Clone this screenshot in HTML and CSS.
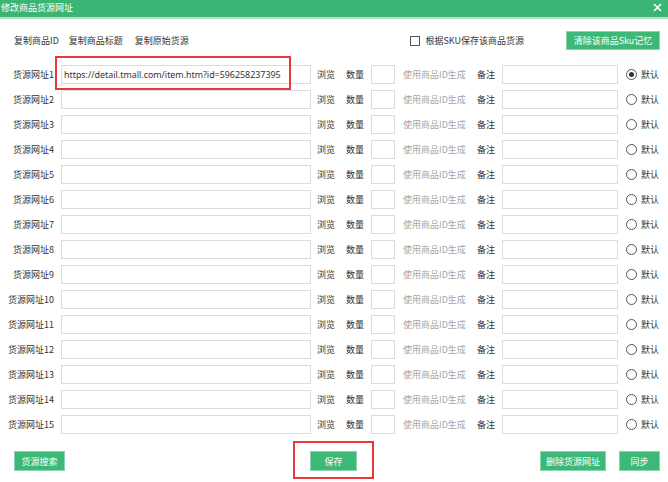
FILE: index.html
```html
<!DOCTYPE html>
<html lang="zh-CN">
<head>
<meta charset="utf-8">
<title>修改商品货源网址</title>
<link rel="stylesheet" href="styles.css">
</head>
<body>
<div class="dialog">
  <div class="titlebar">
    <span class="title">修改商品货源网址</span>
    <svg class="close" width="9" height="9" viewBox="0 0 9 9"><path d="M1 1L8 8M8 1L1 8" stroke="#fff" stroke-width="1.6" fill="none"/></svg>
  </div>
  <div class="toolbar">
    <span class="link">复制商品ID</span>
    <span class="link">复制商品标题</span>
    <span class="link">复制原始货源</span>
    <label class="check"><span class="box"></span>根据SKU保存该商品货源</label>
    <span class="btn btn-clear">清除该商品Sku记忆</span>
  </div>
  <div class="rows">
    <div class="row"><span class="lbl">货源网址1</span><input class="url" value="https://detail.tmall.com/item.htm?id=596258237395"><span class="t browse">浏览</span><span class="t qtyl">数量</span><input class="qty"><span class="gen">使用商品ID生成</span><span class="t note">备注</span><input class="remark"><span class="radio on"></span><span class="t def">默认</span></div>
    <div class="row"><span class="lbl">货源网址2</span><input class="url"><span class="t browse">浏览</span><span class="t qtyl">数量</span><input class="qty"><span class="gen">使用商品ID生成</span><span class="t note">备注</span><input class="remark"><span class="radio"></span><span class="t def">默认</span></div>
    <div class="row"><span class="lbl">货源网址3</span><input class="url"><span class="t browse">浏览</span><span class="t qtyl">数量</span><input class="qty"><span class="gen">使用商品ID生成</span><span class="t note">备注</span><input class="remark"><span class="radio"></span><span class="t def">默认</span></div>
    <div class="row"><span class="lbl">货源网址4</span><input class="url"><span class="t browse">浏览</span><span class="t qtyl">数量</span><input class="qty"><span class="gen">使用商品ID生成</span><span class="t note">备注</span><input class="remark"><span class="radio"></span><span class="t def">默认</span></div>
    <div class="row"><span class="lbl">货源网址5</span><input class="url"><span class="t browse">浏览</span><span class="t qtyl">数量</span><input class="qty"><span class="gen">使用商品ID生成</span><span class="t note">备注</span><input class="remark"><span class="radio"></span><span class="t def">默认</span></div>
    <div class="row"><span class="lbl">货源网址6</span><input class="url"><span class="t browse">浏览</span><span class="t qtyl">数量</span><input class="qty"><span class="gen">使用商品ID生成</span><span class="t note">备注</span><input class="remark"><span class="radio"></span><span class="t def">默认</span></div>
    <div class="row"><span class="lbl">货源网址7</span><input class="url"><span class="t browse">浏览</span><span class="t qtyl">数量</span><input class="qty"><span class="gen">使用商品ID生成</span><span class="t note">备注</span><input class="remark"><span class="radio"></span><span class="t def">默认</span></div>
    <div class="row"><span class="lbl">货源网址8</span><input class="url"><span class="t browse">浏览</span><span class="t qtyl">数量</span><input class="qty"><span class="gen">使用商品ID生成</span><span class="t note">备注</span><input class="remark"><span class="radio"></span><span class="t def">默认</span></div>
    <div class="row"><span class="lbl">货源网址9</span><input class="url"><span class="t browse">浏览</span><span class="t qtyl">数量</span><input class="qty"><span class="gen">使用商品ID生成</span><span class="t note">备注</span><input class="remark"><span class="radio"></span><span class="t def">默认</span></div>
    <div class="row"><span class="lbl">货源网址10</span><input class="url"><span class="t browse">浏览</span><span class="t qtyl">数量</span><input class="qty"><span class="gen">使用商品ID生成</span><span class="t note">备注</span><input class="remark"><span class="radio"></span><span class="t def">默认</span></div>
    <div class="row"><span class="lbl">货源网址11</span><input class="url"><span class="t browse">浏览</span><span class="t qtyl">数量</span><input class="qty"><span class="gen">使用商品ID生成</span><span class="t note">备注</span><input class="remark"><span class="radio"></span><span class="t def">默认</span></div>
    <div class="row"><span class="lbl">货源网址12</span><input class="url"><span class="t browse">浏览</span><span class="t qtyl">数量</span><input class="qty"><span class="gen">使用商品ID生成</span><span class="t note">备注</span><input class="remark"><span class="radio"></span><span class="t def">默认</span></div>
    <div class="row"><span class="lbl">货源网址13</span><input class="url"><span class="t browse">浏览</span><span class="t qtyl">数量</span><input class="qty"><span class="gen">使用商品ID生成</span><span class="t note">备注</span><input class="remark"><span class="radio"></span><span class="t def">默认</span></div>
    <div class="row"><span class="lbl">货源网址14</span><input class="url"><span class="t browse">浏览</span><span class="t qtyl">数量</span><input class="qty"><span class="gen">使用商品ID生成</span><span class="t note">备注</span><input class="remark"><span class="radio"></span><span class="t def">默认</span></div>
    <div class="row"><span class="lbl">货源网址15</span><input class="url"><span class="t browse">浏览</span><span class="t qtyl">数量</span><input class="qty"><span class="gen">使用商品ID生成</span><span class="t note">备注</span><input class="remark"><span class="radio"></span><span class="t def">默认</span></div>
  </div>
  <div class="footer">
    <span class="btn btn-search">货源搜索</span>
    <span class="btn btn-save">保存</span>
    <div class="right">
      <span class="btn btn-del">删除货源网址</span>
      <span class="btn btn-sync">同步</span>
    </div>
  </div>
  <div class="mark mark-url"></div>
  <div class="mark mark-save"></div>
</div>
</body>
</html>
```

FILE: styles.css
```css
* { box-sizing: border-box; }
html, body { margin: 0; padding: 0; background: #fff; }
body {
  width: 668px;
  height: 482px;
  overflow: hidden;
  font-family: "Noto Sans CJK SC", "Noto Sans", sans-serif;
  font-size: 9px;
  color: #333;
}
.dialog { position: relative; width: 668px; height: 482px; }

.titlebar {
  height: 19px;
  background: #3bb574;
  border-bottom: 2px solid #b3e2c7;
  display: flex;
  align-items: center;
  padding-left: 1px;
  padding-right: 6px;
}
.title { color: #fff; font-size: 9px; line-height: 1; flex: 1; margin-top: -3px; }
.close { display: block; margin-top: -3px; }

.toolbar {
  height: 43px;
  display: flex;
  align-items: center;
  padding-left: 14px;
  padding-right: 8px;
}
.link { margin-right: 10px; line-height: 1; }
.link:nth-child(2) { margin-right: 12px; }
.check {
  display: flex;
  align-items: center;
  margin-left: auto;
  line-height: 1;
  margin-right: 42px;
}
.box {
  width: 10px;
  height: 10px;
  border: 1px solid #555;
  margin-right: 5px;
  background: #fff;
}
.btn {
  display: flex;
  align-items: center;
  justify-content: center;
  height: 20px;
  background: #3cb877;
  border: 1px solid #8cd4ab;
  color: #fff;
  font-size: 9px;
  line-height: 1;
}
.btn-clear { width: 94px; height: 19px; }

.rows { display: flex; flex-direction: column; height: 373px; overflow: hidden; }
.row {
  height: 25px;
  flex: none;
  display: flex;
  align-items: center;
}
.row input {
  height: 19px;
  border: 1px solid #dcdcdc;
  background: #fff;
  padding: 0 2px;
  margin: 0;
  font-family: "Noto Sans", "Noto Sans CJK SC", sans-serif;
  font-size: 8.9px;
  color: #333;
  outline: none;
}
.lbl { width: 54px; text-align: right; line-height: 1; flex: none; }
.t { line-height: 1; flex: none; }
.url { width: 250px; margin-left: 7px !important; }
.browse { margin-left: 6px; width: 18px; }
.qtyl { margin-left: 11px; width: 18px; }
.qty { width: 24px; margin-left: 7px !important; }
.gen { margin-left: 8px; width: 64px; color: #a6a6a6; line-height: 1; flex: none; }
.note { margin-left: 10px; width: 18px; }
.remark { width: 116px; margin-left: 7px !important; }
.radio {
  width: 11px;
  height: 11px;
  border: 1px solid #555;
  border-radius: 50%;
  margin-left: 8px;
  flex: none;
  display: flex;
  align-items: center;
  justify-content: center;
}
.radio.on::after {
  content: "";
  width: 5px;
  height: 5px;
  border-radius: 50%;
  background: #333;
}
.def { margin-left: 4px; }

.footer {
  display: flex;
  align-items: center;
  padding: 16px 8px 0 14px;
}
.btn-search { width: 51px; }
.btn-save { width: 47px; margin-left: 245px; }
.right { margin-left: auto; display: flex; gap: 13px; }
.btn-del { width: 66px; }
.btn-sync { width: 41px; }

.mark {
  position: absolute;
  border: 2px solid #e8383b;
}
.mark-url { left: 55px; top: 56px; width: 236px; height: 34px; }
.mark-save { left: 293px; top: 441px; width: 81px; height: 38px; }
```
